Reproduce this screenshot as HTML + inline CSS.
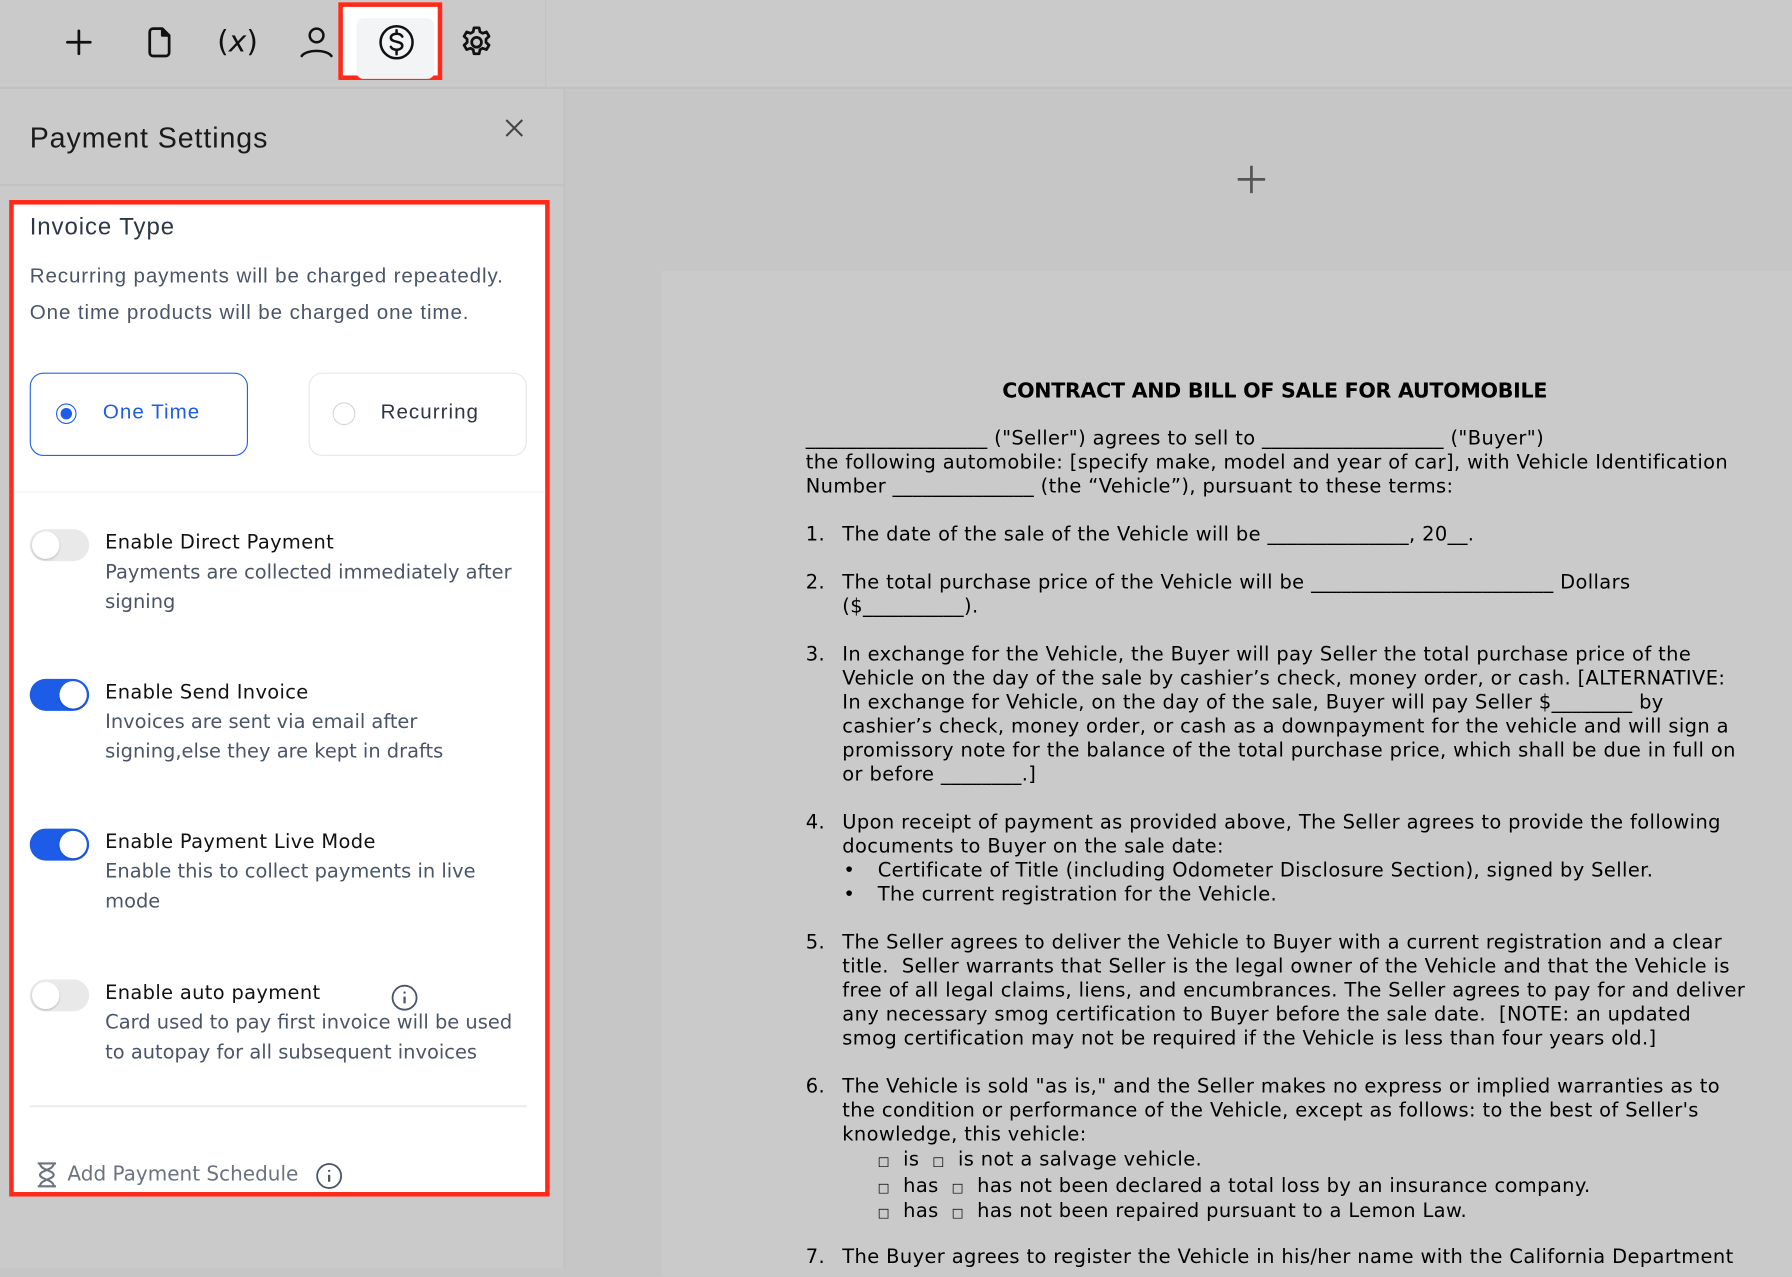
<!DOCTYPE html>
<html><head><meta charset="utf-8"><style>
html,body{margin:0;padding:0;width:1792px;height:1268px;overflow:hidden;background:#c6c6c6}
#w{position:absolute;left:0;top:0;width:1568px;height:1110px;transform:scale(1.142857);transform-origin:0 0;background:#c6c6c6;font-family:"Liberation Sans",sans-serif}
.a{position:absolute}
.tb{left:0;top:0;width:1568px;height:76px;background:#cacaca;border-bottom:2px solid #c2c2c2}
.ic{position:absolute;top:22px;width:30px;height:30px}
.panel{left:0;top:78px;width:493px;height:1032px;background:#cacaca;border-right:2px solid #c2c2c2}
.box{left:8px;top:175px;width:465px;height:864px;border:4px solid #ff2a1a;background:#fff}
.dj{font-family:"DejaVu Sans",sans-serif}
.tg{position:absolute;left:14px;width:52px;height:28px;border-radius:15px;background:#e9e9e9}
.tg i{position:absolute;top:2px;left:2px;width:24px;height:24px;border-radius:50%;background:#fff;box-shadow:0 1px 2px rgba(0,0,0,.2)}
.tg.on{background:#1d5ce6}.tg.on i{left:26px}
.tt{position:absolute;left:80px;font-size:17px;color:#111;font-family:"DejaVu Sans",sans-serif;white-space:nowrap;letter-spacing:0.3px}
.td{position:absolute;left:80px;font-size:17px;color:#4a5568;font-family:"DejaVu Sans",sans-serif;line-height:26px;white-space:nowrap}
.paper{left:579px;top:237px;width:1000px;height:880px;background:#cacaca}
.d{position:absolute;font-family:"DejaVu Sans",sans-serif;font-size:17px;line-height:21px;color:#000;white-space:nowrap;letter-spacing:0.34px}
.ls{letter-spacing:0.8px}
</style></head><body><div id="w">
<div class="a tb"></div>
<div class="a" style="left:477px;top:0;width:1px;height:76px;background:#c2c2c2"></div>
<svg class="ic" style="left:54px" viewBox="0 0 30 30" fill="none" stroke="#111" stroke-width="2.4" stroke-linecap="round"><path d="M15 5v20M5 15h20"/></svg>
<svg class="ic" style="left:124px" viewBox="0 0 30 30" fill="none" stroke="#111" stroke-width="2.4" stroke-linejoin="round"><path d="M7 6a3 3 0 0 1 3-3h8l6 6v15a3 3 0 0 1-3 3H10a3 3 0 0 1-3-3z"/><path d="M18 3v6h6" fill="#111"/></svg>
<div class="a" style="left:190px;top:22px;font-size:26px;color:#111;font-family:'DejaVu Sans',sans-serif">(<i>x</i>)</div>
<svg class="ic" style="left:262px" viewBox="0 0 30 30" fill="none" stroke="#111" stroke-width="2.2" stroke-linecap="round"><circle cx="15" cy="9" r="6"/><path d="M2 27c4-6 22-6 26 0"/></svg>
<div class="a" style="left:296px;top:2px;width:83px;height:60px;border:4px solid #ff2a1a;background:#fff"></div>
<div class="a" style="left:312px;top:16px;width:68px;height:53px;border-radius:6px;background:#f3f4f6"></div>
<svg class="ic" style="left:331px;top:21px;width:32px;height:32px" viewBox="0 0 32 32" fill="none" stroke="#111" stroke-width="2.2" stroke-linecap="round"><circle cx="16" cy="16" r="14"/><path d="M21 11c-1-2-3-2.5-5-2.5s-5 1-5 3.5 3 3 5 3.5 5 1 5 3.5-3 3.5-5 3.5-4-.5-5-2.5M16 5.5v3M16 23.5v3"/></svg>
<svg class="ic" style="left:401px;top:21px;width:32px;height:32px" viewBox="0 0 24 24" fill="none" stroke="#111" stroke-width="1.8" stroke-linejoin="round"><path d="M10.3 2.5h3.4l.5 2.6 1.8 1 2.5-.9 1.7 2.9-2 1.8v2.2l2 1.8-1.7 2.9-2.5-.9-1.8 1-.5 2.6h-3.4l-.5-2.6-1.8-1-2.5.9-1.700-2.9 2-1.8v-2.2l-2-1.8 1.7-2.9 2.5.9 1.8-1z"/><circle cx="12" cy="12" r="3.2"/></svg>

<div class="a panel"></div>
<div class="a" style="left:0;top:161px;width:493px;height:2px;background:#c2c2c2"></div>
<div class="a ls" style="left:26px;top:107px;font-size:25px;color:#1a1a1a">Payment Settings</div>
<svg class="a" style="left:441px;top:103px" width="18" height="18" viewBox="0 0 18 18" stroke="#444" stroke-width="1.8"><path d="M2 2l14 14M16 2L2 16"/></svg>

<div class="a box">
<div class="a ls" style="left:14px;top:8px;font-size:21px;color:#2d3748">Invoice Type</div>
<div class="a" style="left:14px;top:46px;font-size:18px;color:#4a5568;line-height:32px;letter-spacing:0.78px;white-space:nowrap">Recurring payments will be charged repeatedly.<br>One time products will be charged one time.</div>
<div class="a" style="left:14px;top:147px;width:189px;height:71px;border:1px solid #2563eb;border-radius:12px"></div>
<div class="a" style="left:37px;top:174px;width:18px;height:18px;border:1.5px solid #2563eb;border-radius:50%;box-sizing:border-box"></div>
<div class="a" style="left:41px;top:178px;width:10px;height:10px;background:#1d5ce6;border-radius:50%"></div>
<div class="a" style="left:78px;top:171px;font-size:18px;color:#1d5ce6;letter-spacing:0.9px">One Time</div>
<div class="a" style="left:258px;top:147px;width:189px;height:71px;border:1px solid #e5e7eb;border-radius:12px"></div>
<div class="a" style="left:279px;top:173px;width:20px;height:20px;border:1px solid #d6d6d6;border-radius:50%;box-sizing:border-box"></div>
<div class="a" style="left:321px;top:171px;font-size:18px;color:#2d3748;letter-spacing:0.9px">Recurring</div>
<div class="a" style="left:0;top:251px;width:465px;height:1px;background:#eceef1"></div>

<div class="tg" style="top:284px"><i></i></div>
<div class="tt" style="top:286px">Enable Direct Payment</div>
<div class="td" style="top:309px">Payments are collected immediately after<br>signing</div>
<div class="tg on" style="top:415px"><i></i></div>
<div class="tt" style="top:417px">Enable Send Invoice</div>
<div class="td" style="top:440px">Invoices are sent via email after<br>signing,else they are kept in drafts</div>
<div class="tg on" style="top:546px"><i></i></div>
<div class="tt" style="top:548px">Enable Payment Live Mode</div>
<div class="td" style="top:571px">Enable this to collect payments in live<br>mode</div>
<div class="tg" style="top:678px"><i></i></div>
<div class="tt" style="top:680px">Enable auto payment</div>
<svg class="a" style="left:330px;top:682px" width="24" height="24" viewBox="0 0 24 24" fill="none" stroke="#4a5568" stroke-width="1.6"><circle cx="12" cy="12" r="10.5"/><path d="M12 11v6" stroke-width="2"/><circle cx="12" cy="7.5" r="1" fill="#4a5568" stroke="none"/></svg>
<div class="td" style="top:703px">Card used to pay first invoice will be used<br>to autopay for all subsequent invoices</div>
<div class="a" style="left:14px;top:788px;width:435px;height:2px;background:#eceef1"></div>
<svg class="a" style="left:18px;top:837px" width="22" height="24" viewBox="0 0 22 24" fill="none" stroke="#6b7280" stroke-width="1.8" stroke-linejoin="round"><path d="M3 2h16M3 22h16M5 2c0 6 12 6 12 10S5 16 5 22M17 2c0 6-12 6-12 10s12 4 12 10"/></svg>
<div class="a dj" style="left:47px;top:839px;font-size:17.5px;color:#6b7280">Add Payment Schedule</div>
<svg class="a" style="left:264px;top:838px" width="24" height="24" viewBox="0 0 24 24" fill="none" stroke="#4a5568" stroke-width="1.6"><circle cx="12" cy="12" r="10.5"/><path d="M12 11v6" stroke-width="2"/><circle cx="12" cy="7.5" r="1" fill="#4a5568" stroke="none"/></svg>
</div>

<svg class="a" style="left:1082px;top:144px" width="26" height="26" viewBox="0 0 26 26" stroke="#555" stroke-width="2.4"><path d="M13 1v24M1 13h24"/></svg>
<div class="a paper"></div>
<div class="d" style="left:877px;top:332px;font-weight:bold;font-size:18px;letter-spacing:-0.25px">CONTRACT AND BILL OF SALE FOR AUTOMOBILE</div>
<div class="d" style="left:705px;top:374px">__________________ ("Seller") agrees to sell to __________________ ("Buyer")<br>the following automobile: [specify make, model and year of car], with Vehicle Identification<br>Number ______________ (the “Vehicle”), pursuant to these terms:</div>
<div class="d" style="left:705px;top:458px">1.</div><div class="d" style="left:737px;top:458px">The date of the sale of the Vehicle will be ______________, 20__.</div>
<div class="d" style="left:705px;top:500px">2.</div><div class="d" style="left:737px;top:500px">The total purchase price of the Vehicle will be ________________________ Dollars<br>($__________).</div>
<div class="d" style="left:705px;top:563px">3.</div><div class="d" style="left:737px;top:563px">In exchange for the Vehicle, the Buyer will pay Seller the total purchase price of the<br>Vehicle on the day of the sale by cashier’s check, money order, or cash. [ALTERNATIVE:<br>In exchange for Vehicle, on the day of the sale, Buyer will pay Seller $________ by<br>cashier’s check, money order, or cash as a downpayment for the vehicle and will sign a<br>promissory note for the balance of the total purchase price, which shall be due in full on<br>or before ________.]</div>
<div class="d" style="left:705px;top:710px">4.</div><div class="d" style="left:737px;top:710px">Upon receipt of payment as provided above, The Seller agrees to provide the following<br>documents to Buyer on the sale date:</div>
<div class="d" style="left:738px;top:752px">•<br>•</div><div class="d" style="left:768px;top:752px">Certificate of Title (including Odometer Disclosure Section), signed by Seller.<br>The current registration for the Vehicle.</div>
<div class="d" style="left:705px;top:815px">5.</div><div class="d" style="left:737px;top:815px">The Seller agrees to deliver the Vehicle to Buyer with a current registration and a clear<br>title.&nbsp; Seller warrants that Seller is the legal owner of the Vehicle and that the Vehicle is<br>free of all legal claims, liens, and encumbrances. The Seller agrees to pay for and deliver<br>any necessary smog certification to Buyer before the sale date.&nbsp; [NOTE: an updated<br>smog certification may not be required if the Vehicle is less than four years old.]</div>
<div class="d" style="left:705px;top:941px">6.</div><div class="d" style="left:737px;top:941px">The Vehicle is sold "as is," and the Seller makes no express or implied warranties as to<br>the condition or performance of the Vehicle, except as follows: to the best of Seller's<br>knowledge, this vehicle:</div>
<div class="d" style="left:768px;top:1005px;line-height:21.5px"><span style="font-size:11px">□</span>&nbsp; is &nbsp;<span style="font-size:11px">□</span>&nbsp; is not a salvage vehicle.<br><span style="font-size:11px">□</span>&nbsp; has &nbsp;<span style="font-size:11px">□</span>&nbsp; has not been declared a total loss by an insurance company.<br><span style="font-size:11px">□</span>&nbsp; has &nbsp;<span style="font-size:11px">□</span>&nbsp; has not been repaired pursuant to a Lemon Law.</div>
<div class="d" style="left:705px;top:1090px">7.</div><div class="d" style="left:737px;top:1090px">The Buyer agrees to register the Vehicle in his/her name with the California Department</div>
</div></body></html>
